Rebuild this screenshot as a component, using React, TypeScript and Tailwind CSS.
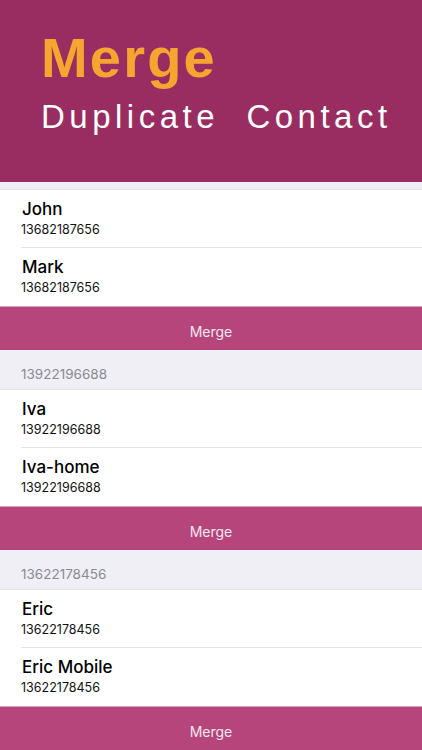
import React from "react";

type Contact = { name: string; phone: string };
type Group = { header?: string; contacts: Contact[] };

const groups: Group[] = [
  {
    contacts: [
      { name: "John", phone: "13682187656" },
      { name: "Mark", phone: "13682187656" },
    ],
  },
  {
    header: "13922196688",
    contacts: [
      { name: "Iva", phone: "13922196688" },
      { name: "Iva-home", phone: "13922196688" },
    ],
  },
  {
    header: "13622178456",
    contacts: [
      { name: "Eric", phone: "13622178456" },
      { name: "Eric Mobile", phone: "13622178456" },
    ],
  },
];

function Row({ c, last }: { c: Contact; last: boolean }) {
  return (
    <div className="bg-white pl-[21px]">
      <div
        className={
          "h-[58px] pt-[8px] " +
          (last ? "" : "border-b border-[#e3e3e8]")
        }
      >
        <div className="text-[17px] leading-[22px] font-medium text-black pl-[1px]">{c.name}</div>
        <div className="text-[12.5px] leading-[16px] mt-[2px] text-[#111]">{c.phone}</div>
      </div>
    </div>
  );
}

export default function App() {
  return (
    <div
      className="w-[422px] h-[750px] overflow-hidden bg-[#f0eff5]"
      style={{ fontFamily: "Inter, 'Liberation Sans', sans-serif" }}
    >
      <div
        className="h-[182px] bg-[#992c60] pl-[41px] pt-[26px]"
        style={{ fontFamily: "'Liberation Sans', Arial, sans-serif" }}
      >
        <div className="text-[56px] leading-[64px] font-bold text-[#f5a631] tracking-[2.2px]">
          Merge
        </div>
        <div className="text-[33px] leading-[40px] text-white tracking-[4.5px] whitespace-pre mt-[7px]">
          {"Duplicate  Contact"}
        </div>
      </div>
      {groups.map((g, i) => (
        <div key={i}>
          {g.header ? (
            <div className="h-[39px] pl-[21px] pt-[15px] text-[13.5px] leading-[18px] text-[#8a8a8f]">
              {g.header}
            </div>
          ) : (
            <div className="h-[7px]" />
          )}
          <div className="border-t border-[#e3e3e8]">
            {g.contacts.map((c, j) => (
              <Row key={j} c={c} last={j === g.contacts.length - 1} />
            ))}
          </div>
          <div className="h-[44px] bg-[#b5457a] border-t border-[#d7a3bd] flex items-center justify-center pt-[5px] text-[14px] text-[#f9e8f0]">
            Merge
          </div>
        </div>
      ))}
    </div>
  );
}
